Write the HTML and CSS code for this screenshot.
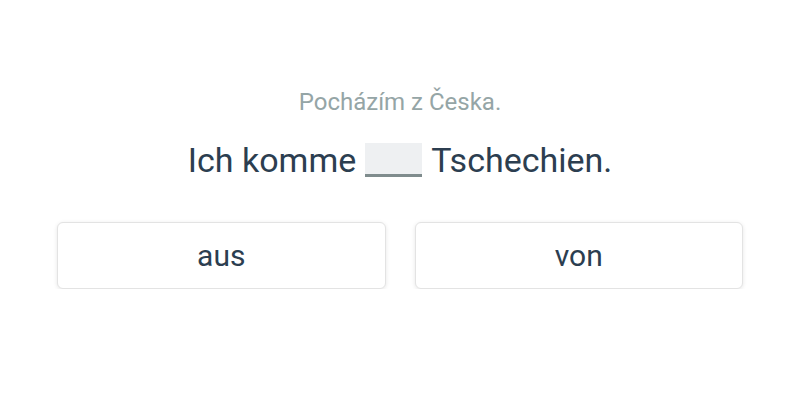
FILE: index.html
```html
<!DOCTYPE html>
<html>
<head>
<meta charset="utf-8">
<link rel="stylesheet" href="styles.css">
</head>
<body>
<main class="exercise">
  <p class="hint">Pocházím z Česka.</p>
  <p class="sentence">Ich komme <span class="blank"></span> Tschechien.</p>
  <div class="options">
    <button class="option">aus</button>
    <button class="option">von</button>
  </div>
</main>
</body>
</html>
```
FILE: styles.css
```css
html, body {
  margin: 0;
  padding: 0;
  background: #ffffff;
  font-family: Roboto, "Liberation Sans", sans-serif;
}
.exercise {
  width: 686px;
  margin: 0 auto;
  padding-top: 86px;
  display: flex;
  flex-direction: column;
  align-items: center;
}
.hint {
  margin: 0;
  font-size: 24px;
  line-height: 32px;
  color: #95a5a6;
}
.sentence {
  margin: 20px 0 0;
  font-size: 34px;
  line-height: 44px;
  color: #2c3e50;
  display: flex;
  align-items: center;
  gap: 9px;
}
.blank {
  display: inline-block;
  width: 57px;
  height: 31px;
  background: #eef0f2;
  border-bottom: 3px solid #7f8c8d;
}
.options {
  margin-top: 40px;
  width: 100%;
  display: flex;
  gap: 29px;
}
.option {
  flex: 1;
  height: 67px;
  background: #fff;
  border: 1px solid #e3e3e3;
  border-radius: 6px;
  box-shadow: 0 1px 4px rgba(0,0,0,0.10);
  font-family: Roboto, "Liberation Sans", sans-serif;
  font-size: 30px;
  color: #2c3e50;
  cursor: pointer;
}
```
